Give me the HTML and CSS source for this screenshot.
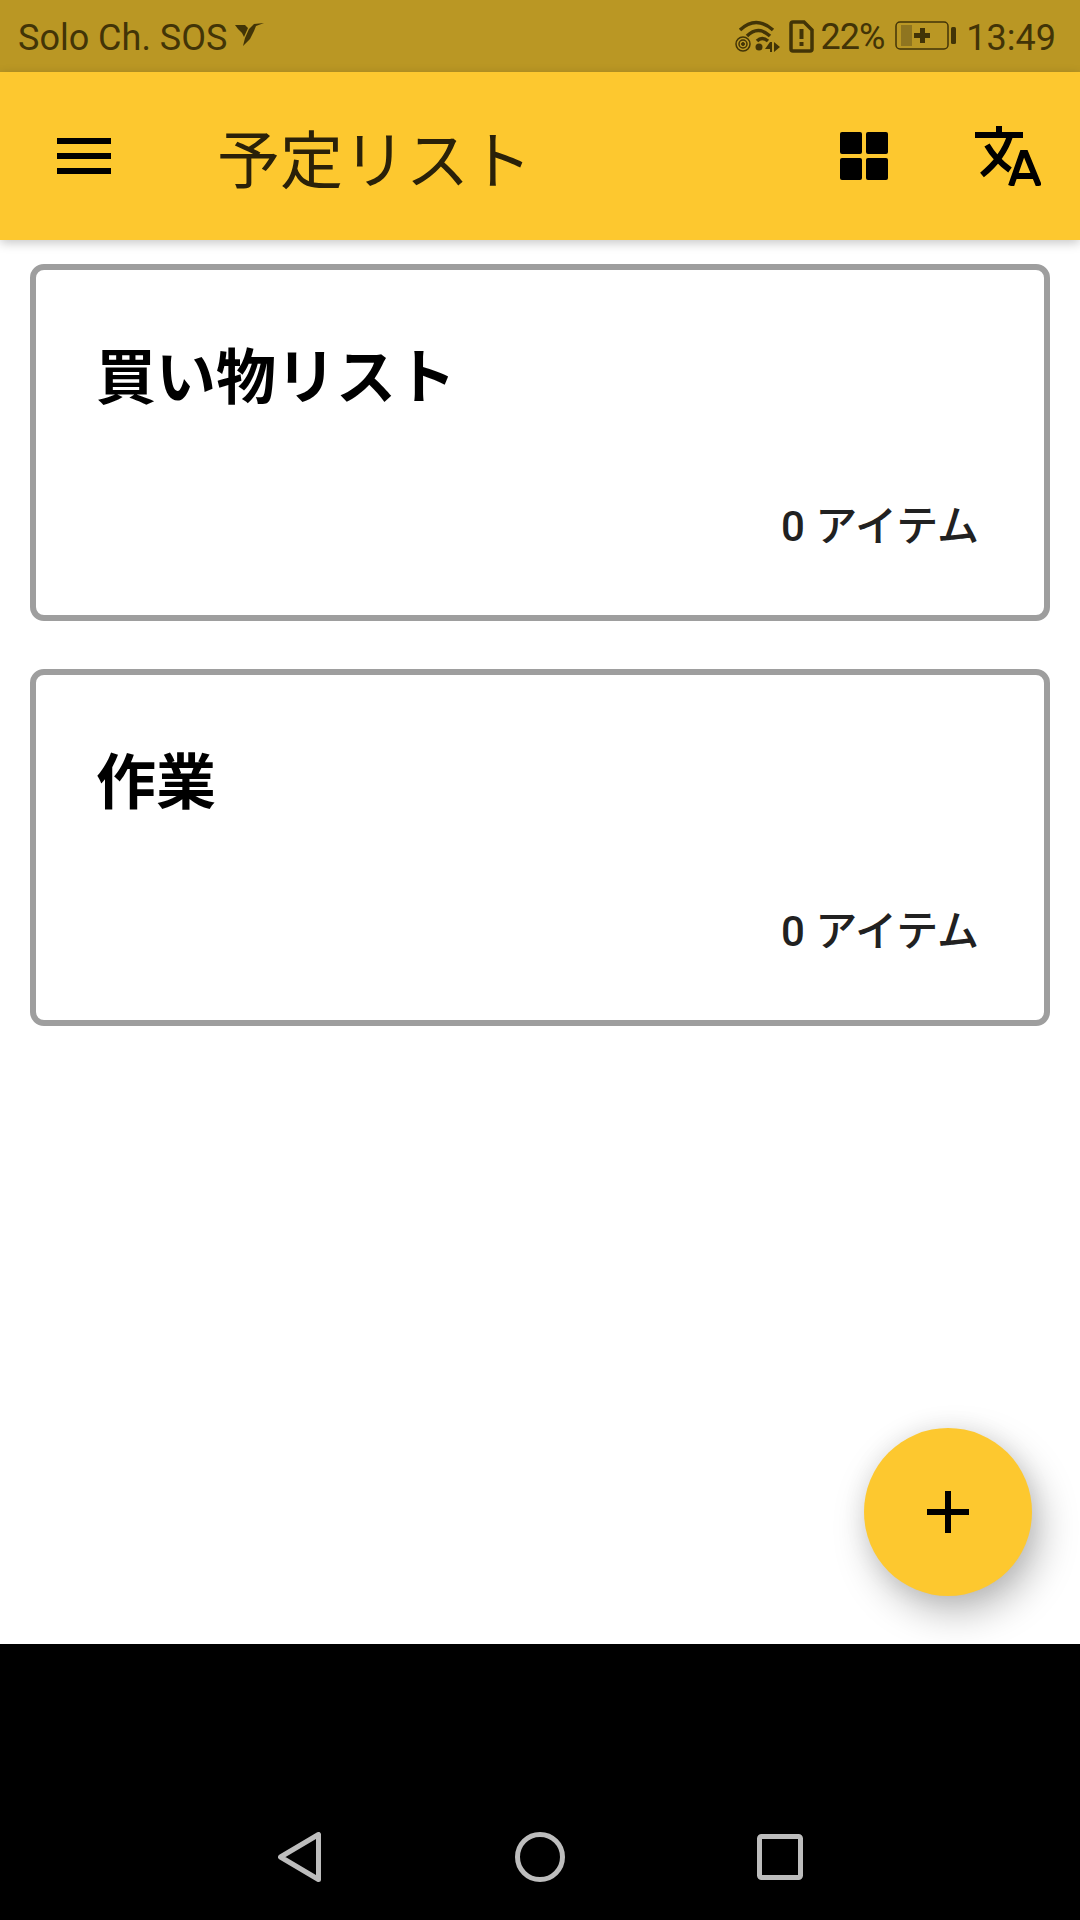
FILE: index.html
```html
<!DOCTYPE html>
<html lang="ja">
<head>
    <meta charset="UTF-8"/>
    <meta name="viewport" content="width=device-width, initial-scale=1.0"/>
    <title>予定リスト</title>
    <link rel="stylesheet" href="styles.css">
</head>
<body>
<!-- status bar -->
<div class="status-bar">
    <div class="status-left">
        <span class="status-text">Solo Ch. SOS</span>
        <svg class="bird-icon" width="30" height="25" viewBox="0 0 30 25">
            <path d="M0 3 H10 L13 6 L9 15 L7 11 L3 7 Z M14 7 L19 2 L29 1 L21 4 L19 9 L15 17 L8 24 L10 16 Z" fill="#423407"/>
        </svg>
    </div>
    <div class="status-right">
        <svg class="wifi-icon" width="46" height="34" viewBox="0 0 46 34" fill="none" stroke="#423407">
            <path d="M5 11 Q21 -4 38 11" stroke-width="3.500"/>
            <path d="M12 17 Q23 6 35 17" stroke-width="3.500"/>
            <path d="M22 22 Q27 17 33 22" stroke-width="3.500"/>
            <circle cx="8" cy="25" r="7" stroke-width="1.500"/>
            <circle cx="8" cy="25" r="4" stroke-width="1.500"/>
            <circle cx="8" cy="25" r="1.500" fill="#423407" stroke-width="1"/>
            <circle cx="24" cy="28" r="3.500" fill="#423407" stroke="none"/>
            <path d="M35 23 L30 30 H35 V33 H37 V23 Z M39 23 V33 L45 28 Z" fill="#423407" stroke="none"/>
        </svg>
        <svg class="sim-icon" width="25" height="33" viewBox="0 0 25 33">
            <path d="M2 4 Q2 2 4 2 H15 L23 10 V29 Q23 31 21 31 H4 Q2 31 2 29 Z" fill="none" stroke="#423407" stroke-width="3.500"/>
            <rect x="10.500" y="9" width="4" height="10" fill="#423407"/>
            <rect x="10.500" y="22" width="4" height="4" fill="#423407"/>
        </svg>
        <span class="battery-text">22%</span>
        <svg class="battery-icon" width="62" height="30" viewBox="0 0 62 30">
            <rect x="1" y="1" width="52" height="27" rx="4" fill="none" stroke="#423407" stroke-width="1.500"/>
            <rect x="6" y="4" width="11" height="21" fill="#8f7520"/>
            <path d="M19 12 H25 V7 H30 V12 H35 V17 H30 V22 H25 V17 H19 Z" fill="#423407"/>
            <rect x="56" y="6" width="5" height="17" rx="1.500" fill="#423407"/>
        </svg>
        <span class="status-text">13:49</span>
    </div>
</div>

<!-- app bar -->
<div class="app-bar">
    <svg class="menu-icon" width="54" height="36" viewBox="0 0 54 36">
        <rect width="54" height="6" y="0"/>
        <rect width="54" height="6" y="15"/>
        <rect width="54" height="6" y="30"/>
    </svg>
    <div class="app-title">予定リスト</div>
    <svg class="grid-icon" width="48" height="48" viewBox="0 0 48 48">
        <rect width="22" height="22" rx="2"/>
        <rect x="26" width="22" height="22" rx="2"/>
        <rect y="26" width="22" height="22" rx="2"/>
        <rect x="26" y="26" width="22" height="22" rx="2"/>
    </svg>
    <svg class="translate-icon" width="66" height="60" viewBox="0 0 66 60">
        <path d="M0 9 H48 M24 0 V9" fill="none" stroke="#000" stroke-width="6"/>
        <path d="M35 10 Q28 32 7 49 M12 19 Q20 33 35 44" fill="none" stroke="#000" stroke-width="6"/>
        <path d="M36 60 L47.500 27 H50.500 L64 60 M41 50 H59" fill="none" stroke="#000" stroke-width="6"/>
    </svg>
</div>

<!-- list -->
<div class="content">
    <div class="card">
        <div class="card-title">買い物リスト</div>
        <div class="card-count">0 アイテム</div>
    </div>
    <div class="card">
        <div class="card-title">作業</div>
        <div class="card-count">0 アイテム</div>
    </div>
    <div class="fab">
        <svg width="42" height="42" viewBox="0 0 42 42">
            <rect x="18" width="6" height="42"/>
            <rect y="18" width="42" height="6"/>
        </svg>
    </div>
</div>

<!-- navigation bar -->
<div class="nav-bar">
    <svg width="44" height="50" viewBox="0 0 44 50">
        <path d="M40.500 2.500 V47.500 L2.500 25 Z" fill="none" stroke="#bdbdbd" stroke-width="5" stroke-linejoin="round"/>
    </svg>
    <svg width="50" height="50" viewBox="0 0 50 50">
        <circle cx="25" cy="25" r="22.500" fill="none" stroke="#bdbdbd" stroke-width="5"/>
    </svg>
    <svg width="46" height="46" viewBox="0 0 46 46">
        <rect x="2.500" y="2.500" width="41" height="41" rx="2" fill="none" stroke="#bdbdbd" stroke-width="5"/>
    </svg>
</div>
</body>
</html>
```

FILE: styles.css
```css
body {
    font-family: Roboto, "Noto Sans CJK JP", sans-serif;
    margin: 0;
    width: 1080px;
    height: 1920px;
    display: flex;
    flex-direction: column;
    background-color: #fff;
    overflow: hidden;
}

svg {
    display: block;
    flex-shrink: 0;
}

.status-bar {
    height: 72px;
    padding: 0 24px 0 18px;
    display: flex;
    justify-content: space-between;
    align-items: center;
    background-color: #ba9724;
    color: #423407;
    font-size: 36px;
}

.status-left {
    display: flex;
    align-items: center;
    gap: 8px;
}

.status-text {
    padding-top: 4px;
}

.bird-icon {
    margin-bottom: 4px;
}

.status-right {
    display: flex;
    align-items: center;
}

.wifi-icon {
    margin-right: 8px;
}

.sim-icon {
    margin-right: 7px;
}

.battery-text {
    margin-right: 11px;
    padding-top: 1px;
    letter-spacing: -1px;
}

.battery-icon {
    margin-right: 9px;
}

.app-bar {
    position: relative;
    z-index: 1;
    height: 168px;
    padding-left: 57px;
    display: flex;
    align-items: center;
    background-color: #fdc82f;
    box-shadow: 0 3px 10px rgba(0, 0, 0, 0.22);
}

.menu-icon {
    margin-right: 106px;
}

.app-title {
    flex: 1;
    font-size: 63px;
    color: #2a2109;
    line-height: 1;
    padding-top: 10px;
}

.grid-icon {
    margin-right: 87px;
}

.translate-icon {
    margin-right: 39px;
}

.content {
    position: relative;
    flex: 1;
    padding: 24px 30px;
    display: flex;
    flex-direction: column;
    gap: 48px;
}

.card {
    box-sizing: border-box;
    height: 357px;
    padding: 74px 65px 0 60px;
    border: 6px solid #9e9e9e;
    border-radius: 14px;
    display: flex;
    flex-direction: column;
}

.card-title {
    font-size: 60px;
    font-weight: bold;
    line-height: 70px;
    color: #000;
}

.card-count {
    margin-top: 88px;
    text-align: right;
    font-size: 42px;
    font-weight: 500;
    line-height: 50px;
    color: #212121;
}

.fab {
    position: absolute;
    left: 864px;
    top: 1188px;
    width: 168px;
    height: 168px;
    border-radius: 50%;
    display: flex;
    align-items: center;
    justify-content: center;
    background-color: #fdc82f;
    box-shadow: 0 0 24px rgba(0, 0, 0, 0.07), 8px 16px 38px rgba(0, 0, 0, 0.27);
}

.nav-bar {
    position: relative;
    z-index: 2;
    height: 276px;
    box-sizing: border-box;
    padding: 188px 277px 38px 278px;
    display: flex;
    justify-content: space-between;
    align-items: center;
    background-color: #000;
}
```
